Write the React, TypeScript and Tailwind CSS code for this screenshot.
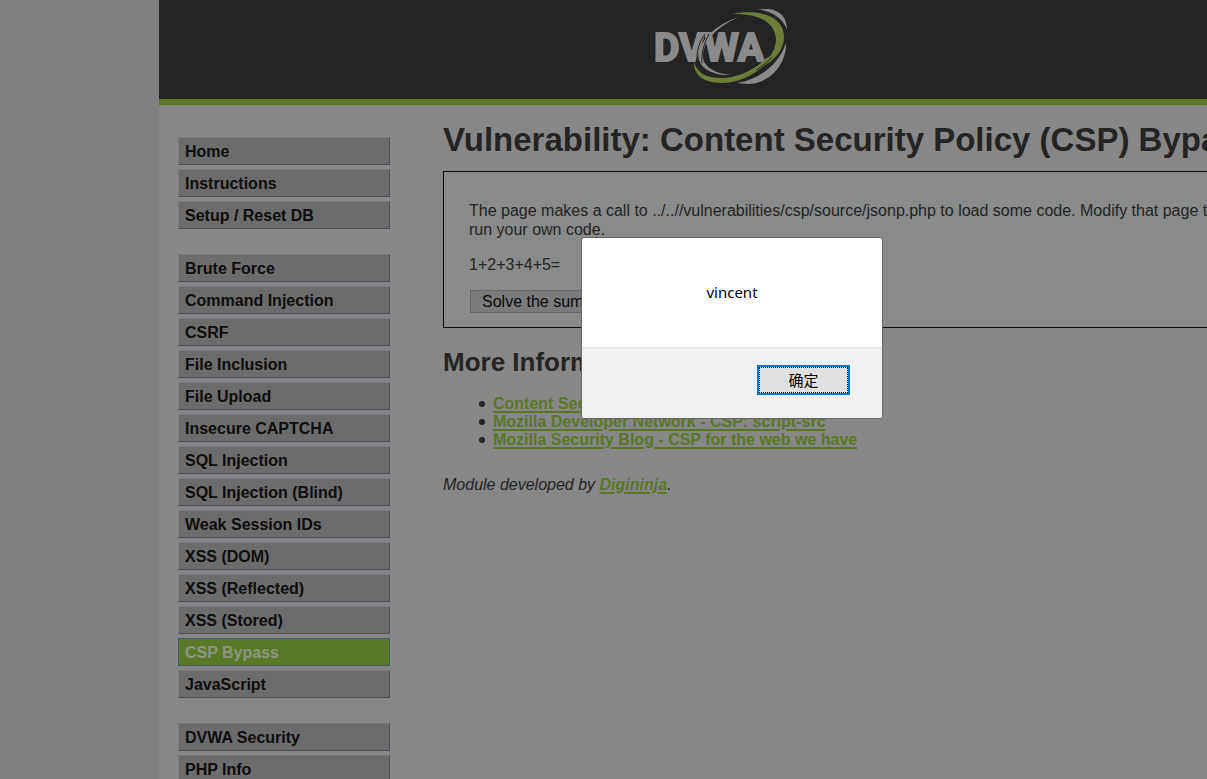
import { useState } from "react";

const menuGroups: string[][] = [
  ["Home", "Instructions", "Setup / Reset DB"],
  [
    "Brute Force",
    "Command Injection",
    "CSRF",
    "File Inclusion",
    "File Upload",
    "Insecure CAPTCHA",
    "SQL Injection",
    "SQL Injection (Blind)",
    "Weak Session IDs",
    "XSS (DOM)",
    "XSS (Reflected)",
    "XSS (Stored)",
    "CSP Bypass",
    "JavaScript",
  ],
  ["DVWA Security", "PHP Info"],
];

const references = [
  "Content Security Policy Reference",
  "Mozilla Developer Network - CSP: script-src",
  "Mozilla Security Blog - CSP for the web we have",
];

function Logo() {
  return (
    <svg viewBox="0 0 134 76" className="h-[76px] w-[134px]" role="img" aria-label="DVWA">
      <path d="M84 8 C64 14 48 28 44 42 C40 58 57 67 77 66 C60 65 47 57 48 46 C49 31 63 17 84 8Z" fill="#8a8a8a" />
      <text
        x="-1"
        y="52"
        fontFamily="Roboto, sans-serif"
        fontWeight="700"
        fontSize="39"
        fill="#8a8a8a"
        stroke="#8a8a8a"
        strokeWidth="2"
      >
        DVWA
      </text>
      <path
        d="M50 25 C45 31 41 43 42 54 M54 25 C49 34 46 46 47 54"
        fill="none"
        stroke="#242424"
        strokeWidth="1"
      />
      <path d="M102 0 C120 -2 132 4 132 21 C129 10 117 2 102 0Z" fill="#8a8a8a" />
      <path d="M131 34 C132 54 115 75 93 75 L82 74 C104 70 123 57 131 34Z" fill="#8a8a8a" />
      <path
        d="M77 5 C103 0 129 6 129 28 C129 42 118 53 103 60 C114 51 121 41 121 30 C120 13 103 4 77 5Z"
        fill="#6b7d38"
      />
      <path
        d="M39 53 C42 64 52 70 70 69 C88 67 101 59 110 50 L118 46 C108 61 88 74 66 74 C49 74 38 66 39 53Z"
        fill="#6b7d38"
      />
      <path d="M101 61 C108 57 113 53 117 48" fill="none" stroke="#242424" strokeWidth="1" />
    </svg>
  );
}

function MenuItem({ label }: { label: string }) {
  const active = label === "CSP Bypass";
  return (
    <li>
      <a
        href="#"
        aria-current={active ? "page" : undefined}
        className={
          active
            ? "block h-7 border border-[#4e566a] bg-[#5a7826] pl-1.5 leading-7 font-bold text-[#8d9585]"
            : "block h-7 border border-t-[#787b7d] border-r-[#4b4f5d] border-b-[#4b4f5d] border-l-[#787b7d] bg-[#6c6c6c] pl-1.5 leading-7 font-bold text-[#0d0d0d]"
        }
      >
        {label}
      </a>
    </li>
  );
}

function AlertDialog({ onClose }: { onClose: () => void }) {
  return (
    <div
      role="alertdialog"
      aria-modal="true"
      aria-labelledby="alert-message"
      className="absolute top-[237px] left-[581px] w-[302px] overflow-hidden rounded-[3px] border border-[#666] bg-white font-['Noto_Sans','Noto_Sans_CJK_SC',sans-serif] text-[15px] text-black"
    >
      <p id="alert-message" className="flex h-[109px] items-center justify-center">
        vincent
      </p>
      <div className="flex h-[71px] justify-end border-t border-[#dfdfdf] bg-[#f1f1f1] pt-[17px] pr-8">
        <button
          type="button"
          onClick={onClose}
          className="h-[30px] w-[93px] border-2 border-[#0078d7] bg-[#e1e1e1] outline-1 -outline-offset-3 outline-dotted outline-black"
        >
          确定
        </button>
      </div>
    </div>
  );
}

export default function App() {
  const [open, setOpen] = useState(true);
  const link = "font-bold text-[#5a7826] underline decoration-2 underline-offset-2";

  return (
    <div className="relative h-screen overflow-hidden bg-[#808080] font-['Liberation_Sans',Arial,sans-serif] text-base text-[#242424]">
      <div className="min-w-[1444px]">
        <div className="mx-auto min-h-screen w-[1126px] bg-[#878787]">
          <header className="flex h-[105px] justify-center border-b-6 border-[#5a7826] bg-[#242424] pt-[9px]">
            <Logo />
          </header>
          <div className="flex">
            <nav className="flex w-[231px] shrink-0 flex-col gap-[25px] pt-8 pl-[19px]">
              {menuGroups.map((group) => (
                <ul key={group[0]} className="flex flex-col gap-1">
                  {group.map((label) => (
                    <MenuItem key={label} label={label} />
                  ))}
                </ul>
              ))}
            </nav>
            <main className="grow pt-4 pr-5 pl-[53px] leading-[19px]">
              <h1 className="text-[33px] leading-[38px] font-bold whitespace-nowrap">
                Vulnerability: Content Security Policy (CSP) Bypass
              </h1>
              <form
                onSubmit={(e) => e.preventDefault()}
                className="mt-3 flex flex-col items-start gap-4 border border-[#0c0c0c] bg-[#888b89] px-[25px] pt-[29px] pb-3.5"
              >
                <p>
                  The page makes a call to ../..//vulnerabilities/csp/source/jsonp.php to load some code. Modify that
                  page to run your own code.
                </p>
                <p>1+2+3+4+5=</p>
                <button
                  type="submit"
                  className="ml-px h-[23px] border border-[#666] bg-[#7b7b7b] px-[11px] pt-px leading-5 text-[#0a0a0a]"
                >
                  Solve the sum
                </button>
              </form>
              <h2 className="mt-[19px] text-[26px] leading-[30px] font-bold">More Information</h2>
              <ul className="mt-[18px] pl-9 leading-[18px]">
                {references.map((text) => (
                  <li
                    key={text}
                    className="flex items-center gap-2 before:size-1.5 before:rounded-full before:bg-[#242424]"
                  >
                    <a href="#" className={link}>
                      {text}
                    </a>
                  </li>
                ))}
              </ul>
              <p className="mt-[26px] italic">
                Module developed by{" "}
                <a href="#" className={link}>
                  Digininja
                </a>
                .
              </p>
            </main>
          </div>
        </div>
      </div>
      {open && <AlertDialog onClose={() => setOpen(false)} />}
    </div>
  );
}
